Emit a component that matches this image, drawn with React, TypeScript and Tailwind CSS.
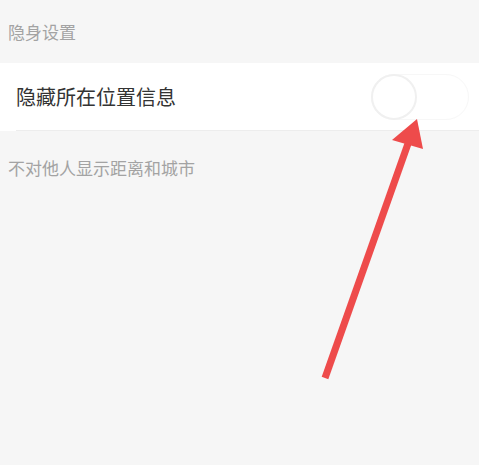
export default function App() {
  return (
    <main
      className="relative min-h-[465px] w-full overflow-hidden bg-[#f6f6f6]"
      style={{ fontFamily: '"Noto Sans CJK SC", "Noto Sans", sans-serif' }}
    >
      <div className="flex h-[63px] items-center pl-[8px] text-[17px] text-[#a3a3a3]">隐身设置</div>
      <div className="bg-white">
        <div className="flex h-[67px] items-center justify-between pl-[16px] pr-[10px]">
          <span className="text-[20px] text-[#333333]">隐藏所在位置信息</span>
          <div className="relative h-[46px] w-[98px] rounded-full border border-[#f7f7f7] bg-white">
            <div className="absolute -left-px -top-px h-[46px] w-[46px] rounded-full border-2 border-[#f0f0f0] bg-white" />
          </div>
        </div>
        <div className="ml-[16px] h-px bg-[#ededed]" />
      </div>
      <div className="pl-[8px] pt-[24px] text-[17px] leading-[25px] text-[#a3a3a3]">不对他人显示距离和城市</div>

      <svg className="pointer-events-none absolute left-0 top-0" width="479" height="465" viewBox="0 0 479 465">
        <line x1="325" y1="378" x2="410" y2="138" stroke="#ee4b4b" strokeWidth="7" strokeLinecap="butt" />
        <polygon points="417,119 392,140 423,149" fill="#ee4b4b" />
      </svg>
    </main>
  );
}
